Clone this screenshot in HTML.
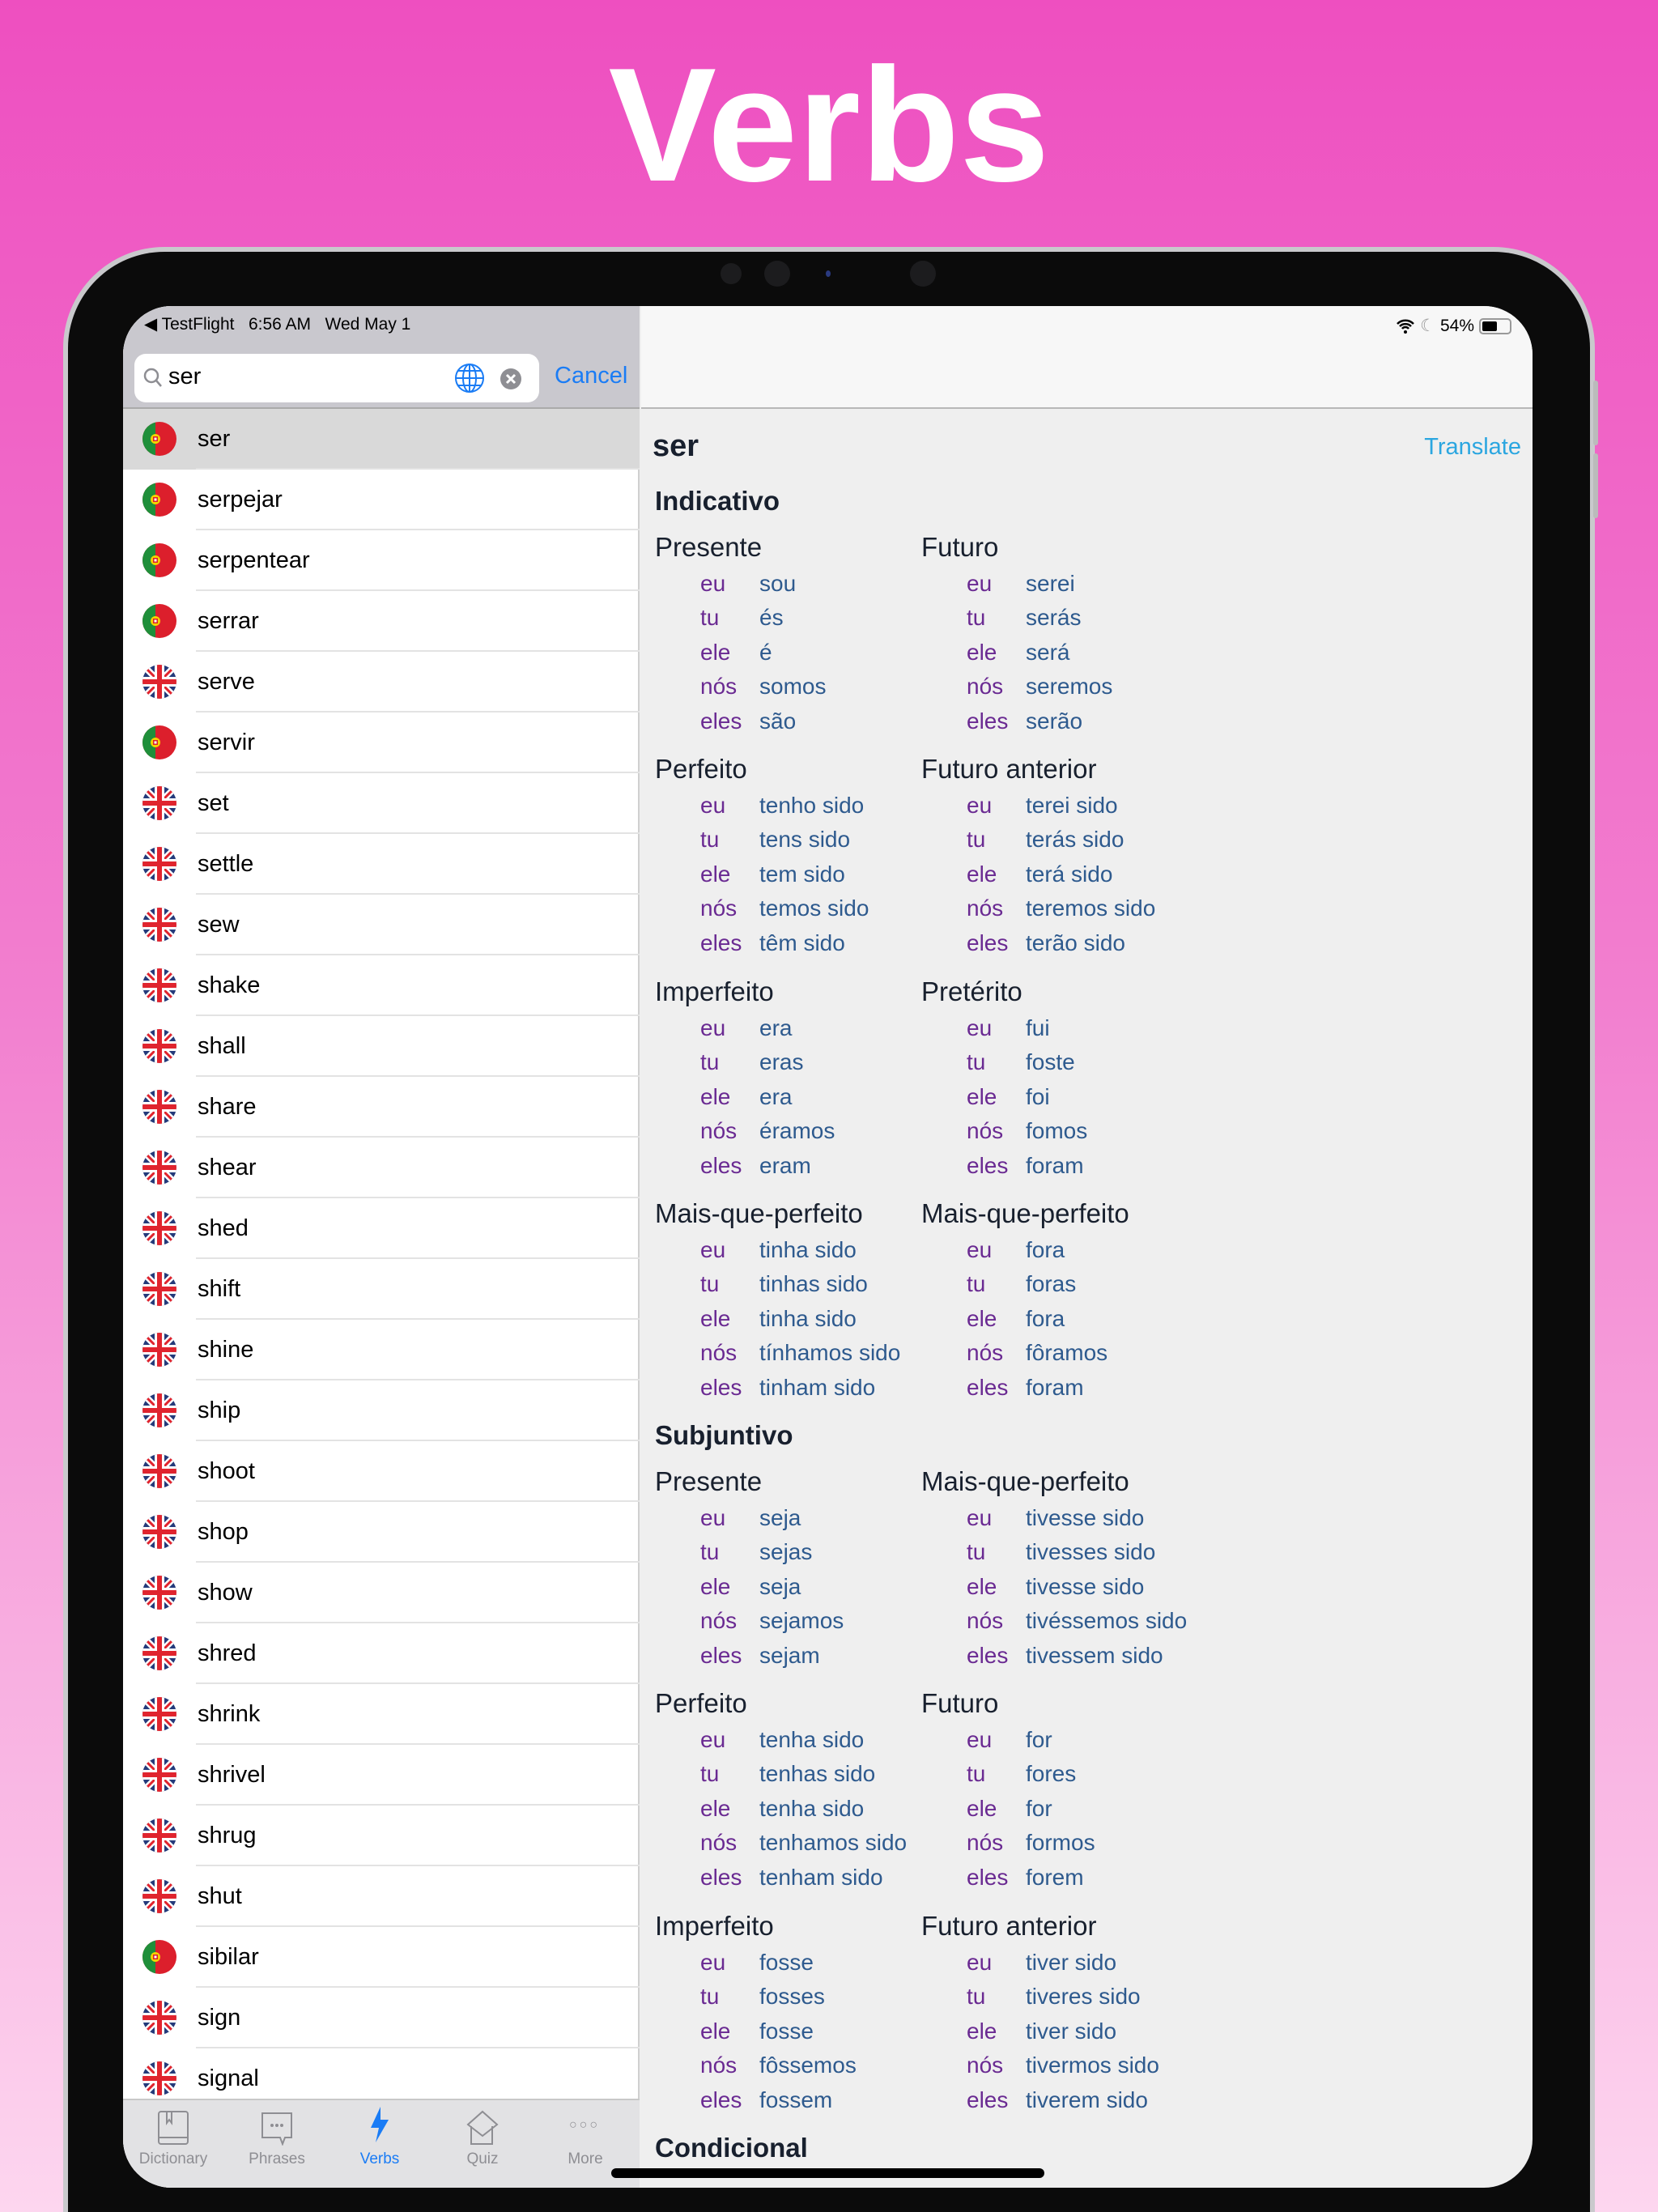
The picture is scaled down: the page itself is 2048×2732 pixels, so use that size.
<!DOCTYPE html>
<html><head><meta charset="utf-8"><style>
*{margin:0;padding:0;box-sizing:border-box}
html,body{width:2048px;height:2732px;overflow:hidden}
body{position:relative;font-family:"Liberation Sans",sans-serif}
#wrap{position:absolute;left:0;top:0;width:2048px;height:2732px;overflow:hidden;background:linear-gradient(#ee4fc0 0%,#f27fcf 45%,#fdd6ef 100%)}
.title{position:absolute;top:40px;left:0;width:2048px;text-align:center;color:#fff;font-size:200px;font-weight:bold;line-height:230px}
.frame{position:absolute;left:78px;top:305px;width:1892px;height:2427px;border-radius:125px 125px 0 0;background:#c9c9cc;padding:6px 6px 0 6px}
.bezel{width:100%;height:100%;border-radius:119px 119px 0 0;background:#0b0b0b}
.screen{position:absolute;left:152px;top:378px;width:1741px;height:2324px;border-radius:60px;overflow:hidden;background:#efefef}
.left{position:absolute;left:0;top:0;width:638px;height:100%;background:#fff;border-right:2px solid #d0d0d0}
.lhead{position:absolute;left:0;top:0;width:638px;height:127px;background:#c9c8ce;border-bottom:2px solid #aaa}
.st{position:absolute;top:10px;font-size:21px;color:#000}
.search{position:absolute;left:14px;top:59px;width:500px;height:60px;background:#fff;border-radius:14px}
.cancel{position:absolute;left:533px;top:70px;font-size:29px;color:#1a7cf5}
.row{position:absolute;left:0;width:638px;height:75px}
.row span{position:absolute;left:92px;top:0;line-height:75px;font-size:29px;color:#000}
.row svg{position:absolute;left:24px;top:16px}
.row:after{content:"";position:absolute;left:90px;right:0;bottom:0;height:2px;background:#e3e3e3}
.tab{position:absolute;left:0;top:2214px;width:638px;height:110px;background:#e2e2e4;border-top:2px solid #c8c8c8}
.tl{position:absolute;top:62px;width:120px;margin-left:-60px;text-align:center;font-size:19px;color:#8e8e93}
.right{position:absolute;left:640px;top:0;right:0;height:100%}
.nav{position:absolute;left:0;top:0;width:100%;height:127px;background:#f7f7f7;border-bottom:2px solid #b8b8b8}
.b{position:absolute}
.h{height:44px;line-height:40px;font-size:33px;color:#18202e;white-space:nowrap}
.r{height:42.4px;line-height:42.4px;font-size:28px;position:relative}
.r i{position:absolute;left:56px;font-style:normal;color:#6a2a92}
.r b{position:absolute;left:129px;font-weight:normal;color:#2e5a8e;white-space:nowrap}
.sec{position:absolute;left:169px;font-size:33px;font-weight:bold;color:#18202e;line-height:40px}
</style></head><body><div id="wrap">
<div class="title">Verbs</div>
<div class="frame"><div class="bezel"></div></div>
<div style="position:absolute;left:1968px;top:470px;width:6px;height:80px;background:#bbb;border-radius:3px"></div>
<div style="position:absolute;left:1968px;top:560px;width:6px;height:80px;background:#bbb;border-radius:3px"></div>
<div style="position:absolute;left:890px;top:325px;width:26px;height:26px;border-radius:50%;background:#1c1c1e"></div>
<div style="position:absolute;left:944px;top:322px;width:32px;height:32px;border-radius:50%;background:#1c1c1e"></div>
<div style="position:absolute;left:1020px;top:334px;width:6px;height:8px;border-radius:50%;background:#2a3a80"></div>
<div style="position:absolute;left:1124px;top:322px;width:32px;height:32px;border-radius:50%;background:#1c1c1e"></div>
<svg width="0" height="0" style="position:absolute"><defs>
<symbol id="pt" viewBox="0 0 42 42"><clipPath id="c1"><circle cx="21" cy="21" r="21"/></clipPath><g clip-path="url(#c1)"><rect width="42" height="42" fill="#dc1f2c"/><rect width="16" height="42" fill="#1f8f3a"/><circle cx="16" cy="21" r="6" fill="#f5d300"/><rect x="13" y="18" width="6" height="6" fill="#dc1f2c"/><rect x="14.5" y="19.5" width="3" height="3" fill="#fff"/></g></symbol>
<symbol id="uk" viewBox="0 0 42 42"><clipPath id="c2"><circle cx="21" cy="21" r="21"/></clipPath><g clip-path="url(#c2)"><rect width="42" height="42" fill="#243a7a"/><path d="M0 0L42 42M42 0L0 42" stroke="#fff" stroke-width="8"/><path d="M0 0L42 42M42 0L0 42" stroke="#e0242e" stroke-width="3"/><rect x="15" width="12" height="42" fill="#fff"/><rect y="15" width="42" height="12" fill="#fff"/><rect x="18" width="6" height="42" fill="#e0242e"/><rect y="18" width="42" height="6" fill="#e0242e"/></g></symbol>
</defs></svg>
<div class="screen">
<div class="left">
<div class="lhead">
<div class="st" style="left:26px">◀ TestFlight&nbsp;&nbsp;&nbsp;6:56 AM&nbsp;&nbsp;&nbsp;Wed May 1</div>
<div class="search">
<svg style="position:absolute;left:10px;top:16px" width="26" height="28" viewBox="0 0 26 28"><circle cx="11" cy="11" r="8" fill="none" stroke="#8e8e93" stroke-width="2.5"/><path d="M17 17L23 24" stroke="#8e8e93" stroke-width="2.5"/></svg>
<div style="position:absolute;left:42px;top:12px;font-size:29px">ser</div>
<svg style="position:absolute;left:395px;top:11px" width="38" height="38" viewBox="0 0 38 38" fill="none" stroke="#1a7cf5" stroke-width="2"><circle cx="19" cy="19" r="17"/><ellipse cx="19" cy="19" rx="8" ry="17"/><path d="M19 2v34M2 19h34M5 10h28M5 28h28"/></svg>
<svg style="position:absolute;left:452px;top:18px" width="26" height="26" viewBox="0 0 26 26"><circle cx="13" cy="13" r="13" fill="#8e8e93"/><path d="M8 8L18 18M18 8L8 18" stroke="#fff" stroke-width="3"/></svg>
</div>
<div class="cancel">Cancel</div>
</div>
<div class="row" style="top:127px;background:#d9d9d9"><svg width="42" height="42"><use href="#pt"/></svg><span>ser</span></div>
<div class="row" style="top:202px"><svg width="42" height="42"><use href="#pt"/></svg><span>serpejar</span></div>
<div class="row" style="top:277px"><svg width="42" height="42"><use href="#pt"/></svg><span>serpentear</span></div>
<div class="row" style="top:352px"><svg width="42" height="42"><use href="#pt"/></svg><span>serrar</span></div>
<div class="row" style="top:427px"><svg width="42" height="42"><use href="#uk"/></svg><span>serve</span></div>
<div class="row" style="top:502px"><svg width="42" height="42"><use href="#pt"/></svg><span>servir</span></div>
<div class="row" style="top:577px"><svg width="42" height="42"><use href="#uk"/></svg><span>set</span></div>
<div class="row" style="top:652px"><svg width="42" height="42"><use href="#uk"/></svg><span>settle</span></div>
<div class="row" style="top:727px"><svg width="42" height="42"><use href="#uk"/></svg><span>sew</span></div>
<div class="row" style="top:802px"><svg width="42" height="42"><use href="#uk"/></svg><span>shake</span></div>
<div class="row" style="top:877px"><svg width="42" height="42"><use href="#uk"/></svg><span>shall</span></div>
<div class="row" style="top:952px"><svg width="42" height="42"><use href="#uk"/></svg><span>share</span></div>
<div class="row" style="top:1027px"><svg width="42" height="42"><use href="#uk"/></svg><span>shear</span></div>
<div class="row" style="top:1102px"><svg width="42" height="42"><use href="#uk"/></svg><span>shed</span></div>
<div class="row" style="top:1177px"><svg width="42" height="42"><use href="#uk"/></svg><span>shift</span></div>
<div class="row" style="top:1252px"><svg width="42" height="42"><use href="#uk"/></svg><span>shine</span></div>
<div class="row" style="top:1327px"><svg width="42" height="42"><use href="#uk"/></svg><span>ship</span></div>
<div class="row" style="top:1402px"><svg width="42" height="42"><use href="#uk"/></svg><span>shoot</span></div>
<div class="row" style="top:1477px"><svg width="42" height="42"><use href="#uk"/></svg><span>shop</span></div>
<div class="row" style="top:1552px"><svg width="42" height="42"><use href="#uk"/></svg><span>show</span></div>
<div class="row" style="top:1627px"><svg width="42" height="42"><use href="#uk"/></svg><span>shred</span></div>
<div class="row" style="top:1702px"><svg width="42" height="42"><use href="#uk"/></svg><span>shrink</span></div>
<div class="row" style="top:1777px"><svg width="42" height="42"><use href="#uk"/></svg><span>shrivel</span></div>
<div class="row" style="top:1852px"><svg width="42" height="42"><use href="#uk"/></svg><span>shrug</span></div>
<div class="row" style="top:1927px"><svg width="42" height="42"><use href="#uk"/></svg><span>shut</span></div>
<div class="row" style="top:2002px"><svg width="42" height="42"><use href="#pt"/></svg><span>sibilar</span></div>
<div class="row" style="top:2077px"><svg width="42" height="42"><use href="#uk"/></svg><span>sign</span></div>
<div class="row" style="top:2152px"><svg width="42" height="42"><use href="#uk"/></svg><span>signal</span></div>
<div class="tab">
<svg style="position:absolute;left:42px;top:12px" width="40" height="44" viewBox="0 0 40 44" fill="none" stroke="#8e8e93" stroke-width="2"><rect x="2" y="2" width="36" height="40" rx="3"/><path d="M2 34h36M12 2v14l3-4 3 4V2"/></svg>
<svg style="position:absolute;left:170px;top:14px" width="40" height="42" viewBox="0 0 40 42" fill="none" stroke="#8e8e93" stroke-width="2"><path d="M2 2h36v30H30l-3 8-3-8H2z"/><circle cx="14" cy="17" r="1" fill="#8e8e93"/><circle cx="20" cy="17" r="1" fill="#8e8e93"/><circle cx="26" cy="17" r="1" fill="#8e8e93"/></svg>
<svg style="position:absolute;left:304px;top:8px" width="26" height="44" viewBox="0 0 26 44"><path d="M14 0L2 26h10L8 44 24 16H14z" fill="#1a7cf5"/></svg>
<svg style="position:absolute;left:422px;top:12px" width="44" height="44" viewBox="0 0 44 44" fill="none" stroke="#8e8e93" stroke-width="2"><path d="M22 2L40 18 22 32 4 18zM8 20v22h26V20"/></svg>
<div style="position:absolute;left:551px;top:22px;font-size:16px;color:#8e8e93;letter-spacing:3px">○○○</div>
<div class="tl" style="left:62px">Dictionary</div>
<div class="tl" style="left:190px">Phrases</div>
<div class="tl" style="left:317px;color:#1a7cf5">Verbs</div>
<div class="tl" style="left:444px">Quiz</div>
<div class="tl" style="left:571px">More</div>
</div>
</div>
<div class="right">
<div class="nav">
<div style="position:absolute;right:26px;top:12px;font-size:21px;display:flex;align-items:center;gap:6px">
<svg width="24" height="20" viewBox="0 0 24 20"><path d="M2 7a14 14 0 0 1 20 0M5 10a10 10 0 0 1 14 0M8 13a5 5 0 0 1 8 0" stroke="#000" stroke-width="2.5" fill="none"/><circle cx="12" cy="17" r="2"/></svg>
<span style="color:#999">☾</span><span>54%</span>
<span style="display:inline-block;width:40px;height:20px;border:2px solid #999;border-radius:5px;padding:2px"><span style="display:block;width:18px;height:100%;background:#000;border-radius:2px"></span></span>
</div>
<svg style="position:absolute;left:1180px;top:66px" width="40" height="40" viewBox="0 0 40 40" fill="none" stroke="#1a7cf5" stroke-width="2.5"><circle cx="20" cy="20" r="17"/><path d="M12 16h5l7-6v20l-7-6h-5z"/></svg>
</div>
<div style="position:absolute;left:14px;top:152px;font-size:38px;font-weight:bold;color:#18202e">ser</div>
<div style="position:absolute;right:14px;top:158px;font-size:29px;color:#2ba6e0">Translate</div>
<div class="sec" style="top:221px;left:17px">Indicativo</div>
<div class="sec" style="top:1375px;left:17px">Subjuntivo</div>
<div class="sec" style="top:2255px;left:17px">Condicional</div>
<div class="b" style="left:17px;top:278px"><div class="h">Presente</div><div class="r"><i>eu</i><b>sou</b></div><div class="r"><i>tu</i><b>és</b></div><div class="r"><i>ele</i><b>é</b></div><div class="r"><i>nós</i><b>somos</b></div><div class="r"><i>eles</i><b>são</b></div></div>
<div class="b" style="left:346px;top:278px"><div class="h">Futuro</div><div class="r"><i>eu</i><b>serei</b></div><div class="r"><i>tu</i><b>serás</b></div><div class="r"><i>ele</i><b>será</b></div><div class="r"><i>nós</i><b>seremos</b></div><div class="r"><i>eles</i><b>serão</b></div></div>
<div class="b" style="left:17px;top:552px"><div class="h">Perfeito</div><div class="r"><i>eu</i><b>tenho sido</b></div><div class="r"><i>tu</i><b>tens sido</b></div><div class="r"><i>ele</i><b>tem sido</b></div><div class="r"><i>nós</i><b>temos sido</b></div><div class="r"><i>eles</i><b>têm sido</b></div></div>
<div class="b" style="left:346px;top:552px"><div class="h">Futuro anterior</div><div class="r"><i>eu</i><b>terei sido</b></div><div class="r"><i>tu</i><b>terás sido</b></div><div class="r"><i>ele</i><b>terá sido</b></div><div class="r"><i>nós</i><b>teremos sido</b></div><div class="r"><i>eles</i><b>terão sido</b></div></div>
<div class="b" style="left:17px;top:827px"><div class="h">Imperfeito</div><div class="r"><i>eu</i><b>era</b></div><div class="r"><i>tu</i><b>eras</b></div><div class="r"><i>ele</i><b>era</b></div><div class="r"><i>nós</i><b>éramos</b></div><div class="r"><i>eles</i><b>eram</b></div></div>
<div class="b" style="left:346px;top:827px"><div class="h">Pretérito</div><div class="r"><i>eu</i><b>fui</b></div><div class="r"><i>tu</i><b>foste</b></div><div class="r"><i>ele</i><b>foi</b></div><div class="r"><i>nós</i><b>fomos</b></div><div class="r"><i>eles</i><b>foram</b></div></div>
<div class="b" style="left:17px;top:1101px"><div class="h">Mais-que-perfeito</div><div class="r"><i>eu</i><b>tinha sido</b></div><div class="r"><i>tu</i><b>tinhas sido</b></div><div class="r"><i>ele</i><b>tinha sido</b></div><div class="r"><i>nós</i><b>tínhamos sido</b></div><div class="r"><i>eles</i><b>tinham sido</b></div></div>
<div class="b" style="left:346px;top:1101px"><div class="h">Mais-que-perfeito</div><div class="r"><i>eu</i><b>fora</b></div><div class="r"><i>tu</i><b>foras</b></div><div class="r"><i>ele</i><b>fora</b></div><div class="r"><i>nós</i><b>fôramos</b></div><div class="r"><i>eles</i><b>foram</b></div></div>
<div class="b" style="left:17px;top:1432px"><div class="h">Presente</div><div class="r"><i>eu</i><b>seja</b></div><div class="r"><i>tu</i><b>sejas</b></div><div class="r"><i>ele</i><b>seja</b></div><div class="r"><i>nós</i><b>sejamos</b></div><div class="r"><i>eles</i><b>sejam</b></div></div>
<div class="b" style="left:346px;top:1432px"><div class="h">Mais-que-perfeito</div><div class="r"><i>eu</i><b>tivesse sido</b></div><div class="r"><i>tu</i><b>tivesses sido</b></div><div class="r"><i>ele</i><b>tivesse sido</b></div><div class="r"><i>nós</i><b>tivéssemos sido</b></div><div class="r"><i>eles</i><b>tivessem sido</b></div></div>
<div class="b" style="left:17px;top:1706px"><div class="h">Perfeito</div><div class="r"><i>eu</i><b>tenha sido</b></div><div class="r"><i>tu</i><b>tenhas sido</b></div><div class="r"><i>ele</i><b>tenha sido</b></div><div class="r"><i>nós</i><b>tenhamos sido</b></div><div class="r"><i>eles</i><b>tenham sido</b></div></div>
<div class="b" style="left:346px;top:1706px"><div class="h">Futuro</div><div class="r"><i>eu</i><b>for</b></div><div class="r"><i>tu</i><b>fores</b></div><div class="r"><i>ele</i><b>for</b></div><div class="r"><i>nós</i><b>formos</b></div><div class="r"><i>eles</i><b>forem</b></div></div>
<div class="b" style="left:17px;top:1981px"><div class="h">Imperfeito</div><div class="r"><i>eu</i><b>fosse</b></div><div class="r"><i>tu</i><b>fosses</b></div><div class="r"><i>ele</i><b>fosse</b></div><div class="r"><i>nós</i><b>fôssemos</b></div><div class="r"><i>eles</i><b>fossem</b></div></div>
<div class="b" style="left:346px;top:1981px"><div class="h">Futuro anterior</div><div class="r"><i>eu</i><b>tiver sido</b></div><div class="r"><i>tu</i><b>tiveres sido</b></div><div class="r"><i>ele</i><b>tiver sido</b></div><div class="r"><i>nós</i><b>tivermos sido</b></div><div class="r"><i>eles</i><b>tiverem sido</b></div></div>
</div>
<div style="position:absolute;left:603px;top:2300px;width:535px;height:12px;border-radius:6px;background:#000"></div>
</div>
</div></body></html>
